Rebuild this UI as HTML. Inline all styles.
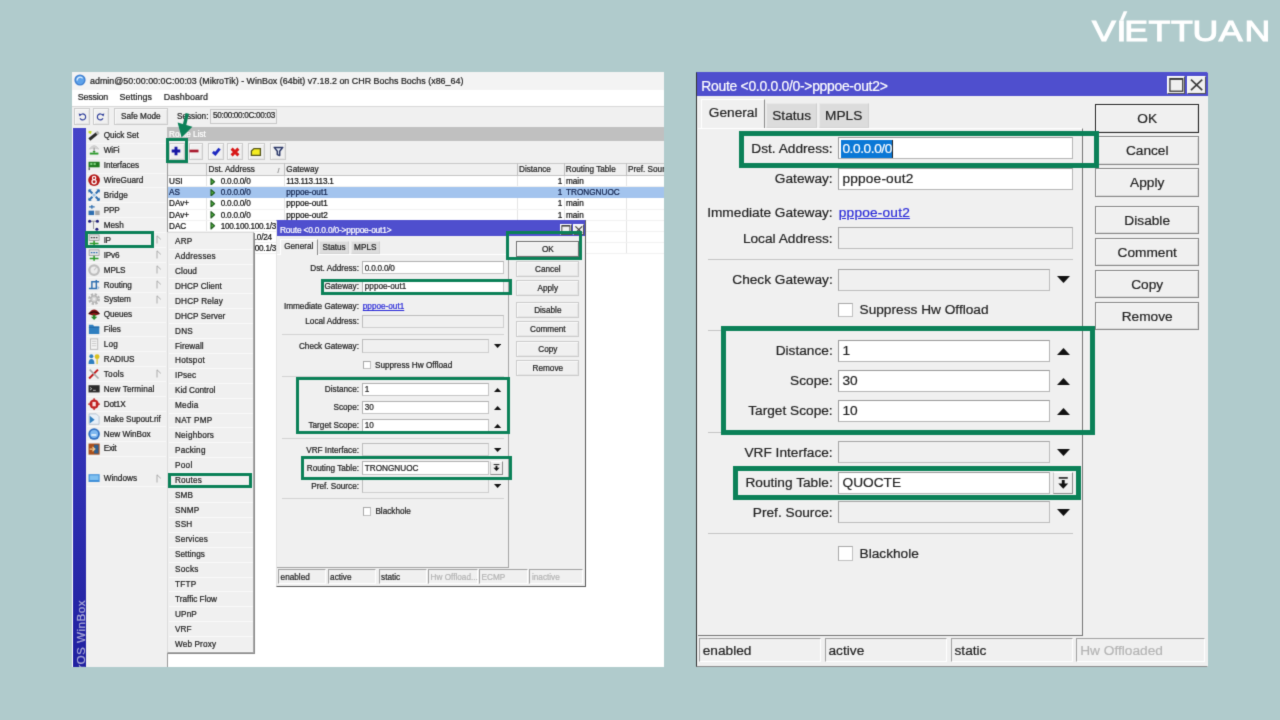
<!DOCTYPE html>
<html lang="en"><head><meta charset="utf-8"><title>WinBox Route</title>
<style>
html,body{margin:0;padding:0}
body{width:1280px;height:720px;background:#b0cbcc;position:relative;overflow:hidden;font-family:"Liberation Sans",sans-serif}
div,span,svg{position:absolute;box-sizing:border-box}
.btn{background:#f0f0f0;border:1px solid #b9b9b9;box-shadow:inset 1px 1px 0 #fbfbfb,inset -1px -1px 0 #dedede;text-align:center;color:#222}
.L .btn{border-color:#cbcbcb;box-shadow:inset 1px 1px 0 #fafafa,inset -1px -1px 0 #e6e6e6}
.L .inp{border-color:#c4c4c4;border-top-color:#b0b0b0;border-left-color:#b0b0b0}
.L .ro{border-color:#cecece;border-top-color:#bcbcbc;border-left-color:#bcbcbc}
.inp{background:#fff;border:1px solid #b4b4b4;border-top-color:#9a9a9a;border-left-color:#9a9a9a}
.ro{background:#f0f0f0;border:1px solid #bcbcbc;border-top-color:#a4a4a4;border-left-color:#a4a4a4}
.cell{border:1px solid #fff;border-top-color:#a0a0a0;border-left-color:#a0a0a0}
</style></head><body>
<svg style="left:0;top:0;width:0;height:0"><defs><filter id="blL" x="0" y="0" width="100%" height="100%" color-interpolation-filters="sRGB"><feConvolveMatrix order="3" kernelMatrix="0.0156 0.0938 0.0156 0.0938 0.5625 0.0938 0.0156 0.0938 0.0156" divisor="1" edgeMode="duplicate" preserveAlpha="true"/></filter><filter id="blR" x="0" y="0" width="100%" height="100%" color-interpolation-filters="sRGB"><feConvolveMatrix order="3" kernelMatrix="0.0121 0.0858 0.0121 0.0858 0.6084 0.0858 0.0121 0.0858 0.0121" divisor="1" edgeMode="duplicate" preserveAlpha="true"/></filter></defs></svg>
<div id="all" style="left:-6px;top:-6px;width:1292px;height:732px;background:#b0cbcc;filter:url(#blL)"><div style="left:6px;top:6px;width:1280px;height:720px">
<svg style="left:1085px;top:0;width:195px;height:52px" viewBox="0 0 195 52"><text transform="scale(1.25,1)" x="5.54 25.23 31.50 50.79 68.83 85.99 107.06 127.55" y="40.9" font-family="Liberation Sans, sans-serif" font-size="28.6" fill="#fff" stroke="#fff" stroke-width="1.0">VIETTUAN</text></svg>
<svg style="left:1115px;top:8px;width:16px;height:14px" viewBox="0 0 16 14"><polygon points="4.8,12.4 8.3,12.4 12.4,3.2 8.7,3.2" fill="#fff"/></svg>
<div id="left" class="L" style="left:0;top:0;width:680px;height:720px;-webkit-text-stroke:0.22px"><div style="left:0;top:0;width:664px;height:667px;overflow:hidden">
<div style="left:72px;top:72px;width:592px;height:595px;background:#fff"></div>
<div style="left:72px;top:72px;width:592px;height:18px;background:#f3f3f3"></div>
<svg style="left:74px;top:74px;width:12px;height:12px" viewBox="0 0 12 12"><circle cx="6" cy="6" r="5.6" fill="#3f7fd0"/><circle cx="6" cy="6" r="4.2" fill="#5da2ea"/><path d="M3.2 6.6 A3 3 0 0 1 8.6 4.4" stroke="#dfefff" stroke-width="1.2" fill="none"/></svg>
<div style="left:90px;top:75.52px;height:11.57px;line-height:11.57px;font-size:8.9px;color:#222;white-space:nowrap;letter-spacing:0.025px;">admin@50:00:00:0C:00:03 (MikroTik) - WinBox (64bit) v7.18.2 on CHR Bochs Bochs (x86_64)</div>
<div style="left:72px;top:90px;width:592px;height:15.5px;background:#fff"></div>
<div style="left:77.7px;top:92.31px;height:11.57px;line-height:11.57px;font-size:8.9px;color:#222;white-space:nowrap;letter-spacing:-0.166px;">Session</div>
<div style="left:119.4px;top:92.31px;height:11.57px;line-height:11.57px;font-size:8.9px;color:#222;white-space:nowrap;letter-spacing:0.080px;">Settings</div>
<div style="left:163.8px;top:92.31px;height:11.57px;line-height:11.57px;font-size:8.9px;color:#222;white-space:nowrap;letter-spacing:0.095px;">Dashboard</div>
<div style="left:72px;top:105.5px;width:592px;height:22px;background:#f0f0f0;border-top:1px solid #d8d8d8"></div>
<div class="btn" style="left:74px;top:107.5px;width:15.5px;height:17px;"></div>
<div class="btn" style="left:92.5px;top:107.5px;width:16.5px;height:17px;"></div>
<svg style="left:77.5px;top:111.5px;width:9px;height:9px" viewBox="0 0 9 9"><path d="M2.2 3.2 A3 3 0 1 1 2 6.3" stroke="#2d3d9a" stroke-width="1.1" fill="none"/><path d="M0.6 1.6 L3.6 2.2 L1.6 4.6Z" fill="#2d3d9a"/></svg>
<svg style="left:96.3px;top:111.5px;width:9px;height:9px" viewBox="0 0 9 9"><path d="M6.8 3.2 A3 3 0 1 0 7 6.3" stroke="#2d3d9a" stroke-width="1.1" fill="none"/><path d="M8.4 1.6 L5.4 2.2 L7.4 4.6Z" fill="#2d3d9a"/></svg>
<div class="btn" style="left:114px;top:107.5px;width:53.5px;height:17px;font-size:8.2px;line-height:15.5px">Safe Mode</div>
<div style="left:177px;top:111.77px;height:10.66px;line-height:10.66px;font-size:8.2px;color:#222;white-space:nowrap;">Session:</div>
<div style="left:210px;top:108.5px;width:67px;height:15.5px;border:1px solid #c8c8c8;background:#f0f0f0"></div>
<div style="left:213px;top:111.17px;height:10.66px;line-height:10.66px;font-size:8.2px;color:#222;white-space:nowrap;letter-spacing:-0.322px;">50:00:00:0C:00:03</div>
<div style="left:73px;top:127.5px;width:12.7px;height:539.5px;background:linear-gradient(#4444c8,#3a3ac0 40%,#2020a0)"></div>
<div style="left:75.2px;top:705.5px;width:200px;height:12.5px;line-height:12.5px;font-size:11.7px;letter-spacing:0.45px;color:#adadd8;transform-origin:0 0;transform:rotate(-90deg);white-space:nowrap;margin-left:0">&nbsp;RouterOS WinBox</div>
<div style="left:86px;top:127.5px;width:81px;height:539.5px;background:#f0f0f0"></div>
<div style="left:87px;top:142.7px;width:79px;height:1px;background:#f8f8f8"></div>
<svg style="left:88.3px;top:129.5px;width:12.2px;height:12.2px" viewBox="0 0 11 11"><path d="M1.2 8.6 L8.6 2.6" stroke="#2a2a2a" stroke-width="2.8"/><path d="M7.6 3.4 L9.6 1.8" stroke="#b8b8b8" stroke-width="2.8"/><path d="M.6 .6 L3.4 1.2 L2.6 3.6 L.4 2.8Z" fill="#c4dc28"/></svg>
<div style="left:103.75px;top:131.47px;height:10.66px;line-height:10.66px;font-size:8.2px;color:#222;white-space:nowrap;letter-spacing:-0.061px;">Quick Set</div>
<div style="left:87px;top:157.6px;width:79px;height:1px;background:#f8f8f8"></div>
<svg style="left:88.3px;top:144.41px;width:12.2px;height:12.2px" viewBox="0 0 11 11"><path d="M1.2 4.6 Q5.5 -1.8 9.8 4.6 Q5.5 2.6 1.2 4.6Z" fill="#d4d4d4" stroke="#c0c0c0" stroke-width=".6"/><rect x="4.9" y="3.4" width="1.3" height="5" fill="#a4a4a4"/><rect x="1.6" y="7.8" width="7.8" height="1.7" fill="#2a9a2a"/><path d="M4 6.4 L5.5 8 L7 6.4Z" fill="#2a9a2a"/></svg>
<div style="left:103.75px;top:146.37px;height:10.66px;line-height:10.66px;font-size:8.2px;color:#222;white-space:nowrap;letter-spacing:-0.148px;">WiFi</div>
<div style="left:87px;top:172.51px;width:79px;height:1px;background:#f8f8f8"></div>
<svg style="left:88.3px;top:159.31px;width:12.2px;height:12.2px" viewBox="0 0 11 11"><rect x=".5" y="2.5" width="10" height="5" fill="#1f7a1f"/><rect x="2" y="3.5" width="2" height="2" fill="#7fd07f"/><rect x="5" y="3.5" width="2" height="2" fill="#7fd07f"/><rect x=".5" y="7.5" width="1.2" height="2.5" fill="#555"/></svg>
<div style="left:103.75px;top:161.28px;height:10.66px;line-height:10.66px;font-size:8.2px;color:#222;white-space:nowrap;letter-spacing:-0.071px;">Interfaces</div>
<div style="left:87px;top:187.41px;width:79px;height:1px;background:#f8f8f8"></div>
<svg style="left:88.3px;top:174.22px;width:12.2px;height:12.2px" viewBox="0 0 11 11"><circle cx="5.5" cy="5.5" r="5.3" fill="#b41a1a"/><circle cx="5.5" cy="3.7" r="1.5" fill="none" stroke="#fff" stroke-width="1.1"/><circle cx="5.5" cy="7" r="1.9" fill="none" stroke="#fff" stroke-width="1.2"/></svg>
<div style="left:103.75px;top:176.18px;height:10.66px;line-height:10.66px;font-size:8.2px;color:#222;white-space:nowrap;letter-spacing:0.006px;">WireGuard</div>
<div style="left:87px;top:202.32px;width:79px;height:1px;background:#f8f8f8"></div>
<svg style="left:88.3px;top:189.12px;width:12.2px;height:12.2px" viewBox="0 0 11 11"><path d="M.8 .8 L4 4 M10.2 .8 L7 4 M.8 10.2 L4 7 M10.2 10.2 L7 7" stroke="#2f6fb0" stroke-width="1.9"/><path d="M.5 .5 H3.4 L.5 3.4Z M10.5 .5 V3.4 L7.6 .5Z M.5 10.5 V7.6 L3.4 10.5Z M10.5 10.5 H7.6 L10.5 7.6Z" fill="#2f6fb0"/><rect x="4.2" y="4.2" width="2.6" height="2.6" fill="#9cc4e8"/></svg>
<div style="left:103.75px;top:191.09px;height:10.66px;line-height:10.66px;font-size:8.2px;color:#222;white-space:nowrap;letter-spacing:0.083px;">Bridge</div>
<div style="left:87px;top:217.22px;width:79px;height:1px;background:#f8f8f8"></div>
<svg style="left:88.3px;top:204.02px;width:12.2px;height:12.2px" viewBox="0 0 11 11"><rect x=".5" y="6" width="5" height="4" fill="#2f6fb0"/><rect x="6.5" y="6" width="4" height="4" fill="#a8a8a8"/><path d="M1 2.5 H6 M3.5 .8 V4.2" stroke="#2f6fb0" stroke-width="1.1"/></svg>
<div style="left:103.75px;top:205.99px;height:10.66px;line-height:10.66px;font-size:8.2px;color:#222;white-space:nowrap;letter-spacing:-0.203px;">PPP</div>
<div style="left:87px;top:232.13px;width:79px;height:1px;background:#f8f8f8"></div>
<svg style="left:88.3px;top:218.93px;width:12.2px;height:12.2px" viewBox="0 0 11 11"><path d="M1.5 2 H8.5 M5 2 V9" stroke="#9a9a9a" stroke-width=".9" fill="none"/><circle cx="1.5" cy="2" r="1.4" fill="#20207a"/><circle cx="8.5" cy="2" r="1.4" fill="#20207a"/><circle cx="8" cy="9.3" r="1.4" fill="#20207a"/></svg>
<div style="left:103.75px;top:220.9px;height:10.66px;line-height:10.66px;font-size:8.2px;color:#222;white-space:nowrap;letter-spacing:-0.013px;">Mesh</div>
<div style="left:87px;top:247.03px;width:79px;height:1px;background:#f8f8f8"></div>
<svg style="left:88.3px;top:233.83px;width:12.2px;height:12.2px" viewBox="0 0 11 11"><rect x="1" y=".8" width="9" height="5" fill="#e4e4e4" stroke="#8a8a8a" stroke-width=".6"/><path d="M2.5 3.3 H8.5" stroke="#444" stroke-width="1.2" stroke-dasharray="1.5 .8"/><path d="M1.5 8.5 H9.5 M5.5 6 V10.5" stroke="#2a9a2a" stroke-width="1.4"/></svg>
<div style="left:103.75px;top:235.8px;height:10.66px;line-height:10.66px;font-size:8.2px;color:#222;white-space:nowrap;letter-spacing:-0.524px;">IP</div>
<svg style="left:155.5px;top:235.33px;width:6px;height:9px" viewBox="0 0 6 9"><path d="M1 8.5 V.8 L4.8 4.4" stroke="#9a9a9a" stroke-width=".8" fill="none"/></svg>
<div style="left:87px;top:261.94px;width:79px;height:1px;background:#f8f8f8"></div>
<svg style="left:88.3px;top:248.74px;width:12.2px;height:12.2px" viewBox="0 0 11 11"><rect x="1" y=".8" width="9" height="5" fill="#e4e4e4" stroke="#8a8a8a" stroke-width=".6"/><path d="M2.5 3.3 H8.5" stroke="#2f6fb0" stroke-width="1.2" stroke-dasharray="1.5 .8"/><path d="M1.5 8.5 H9.5 M5.5 6 V10.5" stroke="#2a9a2a" stroke-width="1.4"/></svg>
<div style="left:103.75px;top:250.71px;height:10.66px;line-height:10.66px;font-size:8.2px;color:#222;white-space:nowrap;letter-spacing:-0.227px;">IPv6</div>
<svg style="left:155.5px;top:250.24px;width:6px;height:9px" viewBox="0 0 6 9"><path d="M1 8.5 V.8 L4.8 4.4" stroke="#9a9a9a" stroke-width=".8" fill="none"/></svg>
<div style="left:87px;top:276.84px;width:79px;height:1px;background:#f8f8f8"></div>
<svg style="left:88.3px;top:263.64px;width:12.2px;height:12.2px" viewBox="0 0 11 11"><circle cx="5.5" cy="5.5" r="4.3" fill="#ececec" stroke="#bdbdbd" stroke-width="2"/><path d="M5.5 5.5 L8 2.5" stroke="#c8c8c8" stroke-width="1"/></svg>
<div style="left:103.75px;top:265.62px;height:10.66px;line-height:10.66px;font-size:8.2px;color:#222;white-space:nowrap;letter-spacing:-0.158px;">MPLS</div>
<svg style="left:155.5px;top:265.14px;width:6px;height:9px" viewBox="0 0 6 9"><path d="M1 8.5 V.8 L4.8 4.4" stroke="#9a9a9a" stroke-width=".8" fill="none"/></svg>
<div style="left:87px;top:291.75px;width:79px;height:1px;background:#f8f8f8"></div>
<svg style="left:88.3px;top:278.55px;width:12.2px;height:12.2px" viewBox="0 0 11 11"><path d="M.8 8.5 H3.5 V2.5 H10 M3.5 8.5 H7.5 V1" stroke="#2f6fb0" stroke-width="1.3" fill="none"/><path d="M8.5 6 L10.5 8 L8.5 10" fill="#9ab8d8"/></svg>
<div style="left:103.75px;top:280.52px;height:10.66px;line-height:10.66px;font-size:8.2px;color:#222;white-space:nowrap;letter-spacing:-0.038px;">Routing</div>
<svg style="left:155.5px;top:280.05px;width:6px;height:9px" viewBox="0 0 6 9"><path d="M1 8.5 V.8 L4.8 4.4" stroke="#9a9a9a" stroke-width=".8" fill="none"/></svg>
<div style="left:87px;top:306.65px;width:79px;height:1px;background:#f8f8f8"></div>
<svg style="left:88.3px;top:293.45px;width:12.2px;height:12.2px" viewBox="0 0 11 11"><circle cx="5.5" cy="5.5" r="4" fill="none" stroke="#b4b4b4" stroke-width="2.6" stroke-dasharray="1.9 1.24"/><circle cx="5.5" cy="5.5" r="2.9" fill="#d4d4d4" stroke="#b4b4b4" stroke-width="1"/><circle cx="5.5" cy="5.5" r="1.2" fill="#ececec"/></svg>
<div style="left:103.75px;top:295.43px;height:10.66px;line-height:10.66px;font-size:8.2px;color:#222;white-space:nowrap;letter-spacing:-0.057px;">System</div>
<svg style="left:155.5px;top:294.95px;width:6px;height:9px" viewBox="0 0 6 9"><path d="M1 8.5 V.8 L4.8 4.4" stroke="#9a9a9a" stroke-width=".8" fill="none"/></svg>
<div style="left:87px;top:321.56px;width:79px;height:1px;background:#f8f8f8"></div>
<svg style="left:88.3px;top:308.36px;width:12.2px;height:12.2px" viewBox="0 0 11 11"><path d="M.3 5.4 Q5.5 -2.6 10.7 5.4 L5.5 7.2Z" fill="#8a1414"/><path d="M.8 5.2 Q5.5 1.6 10.2 5.2" stroke="#2a0a0a" stroke-width="1.1" fill="none"/><path d="M4.4 6 H6.6 V8 H8.4 L5.5 10.8 L2.6 8 H4.4Z" fill="#2a8a2a"/></svg>
<div style="left:103.75px;top:310.33px;height:10.66px;line-height:10.66px;font-size:8.2px;color:#222;white-space:nowrap;letter-spacing:-0.070px;">Queues</div>
<div style="left:87px;top:336.46px;width:79px;height:1px;background:#f8f8f8"></div>
<svg style="left:88.3px;top:323.26px;width:12.2px;height:12.2px" viewBox="0 0 11 11"><path d="M.8 1.5 H4.5 L5.5 3 H10.2 V10 H.8Z" fill="#2f7fc0"/><path d="M.8 4 H10.2" stroke="#1f5f9a" stroke-width=".6"/></svg>
<div style="left:103.75px;top:325.24px;height:10.66px;line-height:10.66px;font-size:8.2px;color:#222;white-space:nowrap;letter-spacing:-0.063px;">Files</div>
<div style="left:87px;top:351.37px;width:79px;height:1px;background:#f8f8f8"></div>
<svg style="left:88.3px;top:338.17px;width:12.2px;height:12.2px" viewBox="0 0 11 11"><rect x="2.2" y=".8" width="6.6" height="9.4" fill="#f4f4f4" stroke="#b4b4b4" stroke-width=".8"/><path d="M3.5 3 H7.5 M3.5 5 H7.5 M3.5 7 H7.5" stroke="#c0c0c0" stroke-width=".7"/></svg>
<div style="left:103.75px;top:340.14px;height:10.66px;line-height:10.66px;font-size:8.2px;color:#222;white-space:nowrap;letter-spacing:0.173px;">Log</div>
<div style="left:87px;top:366.27px;width:79px;height:1px;background:#f8f8f8"></div>
<svg style="left:88.3px;top:353.07px;width:12.2px;height:12.2px" viewBox="0 0 11 11"><circle cx="3" cy="3" r="1.8" fill="#2f7fc0"/><path d="M.5 10 Q.5 5.5 3 5.5 Q5.8 5.5 5.8 10Z" fill="#2f7fc0"/><circle cx="8.2" cy="3.3" r="2.2" fill="#d8c020"/><rect x="7.7" y="5" width="1" height="5" fill="#d8c020"/></svg>
<div style="left:103.75px;top:355.05px;height:10.66px;line-height:10.66px;font-size:8.2px;color:#222;white-space:nowrap;letter-spacing:-0.031px;">RADIUS</div>
<div style="left:87px;top:381.18px;width:79px;height:1px;background:#f8f8f8"></div>
<svg style="left:88.3px;top:367.98px;width:12.2px;height:12.2px" viewBox="0 0 11 11"><path d="M1 9.5 L9 1.5" stroke="#c01818" stroke-width="1.8"/><path d="M1.5 1.5 L9.5 9.5" stroke="#a8a8a8" stroke-width="1.5"/></svg>
<div style="left:103.75px;top:369.95px;height:10.66px;line-height:10.66px;font-size:8.2px;color:#222;white-space:nowrap;letter-spacing:0.271px;">Tools</div>
<svg style="left:155.5px;top:369.48px;width:6px;height:9px" viewBox="0 0 6 9"><path d="M1 8.5 V.8 L4.8 4.4" stroke="#9a9a9a" stroke-width=".8" fill="none"/></svg>
<div style="left:87px;top:396.08px;width:79px;height:1px;background:#f8f8f8"></div>
<svg style="left:88.3px;top:382.88px;width:12.2px;height:12.2px" viewBox="0 0 11 11"><rect x=".5" y="2" width="10" height="6.5" fill="#2a2a2a"/><path d="M1.8 4 L3.4 5.2 L1.8 6.4 M4.5 6.6 H7" stroke="#ddd" stroke-width=".7" fill="none"/></svg>
<div style="left:103.75px;top:384.86px;height:10.66px;line-height:10.66px;font-size:8.2px;color:#222;white-space:nowrap;letter-spacing:0.106px;">New Terminal</div>
<div style="left:87px;top:410.99px;width:79px;height:1px;background:#f8f8f8"></div>
<svg style="left:88.3px;top:397.79px;width:12.2px;height:12.2px" viewBox="0 0 11 11"><circle cx="5.5" cy="5.5" r="4.2" fill="#c02020"/><path d="M.2 5.5 H10.8 M5.5 .2 V10.8" stroke="#c02020" stroke-width="1.2"/><rect x="4" y="3.5" width="3" height="4" fill="#f8e0e0"/></svg>
<div style="left:103.75px;top:399.76px;height:10.66px;line-height:10.66px;font-size:8.2px;color:#222;white-space:nowrap;letter-spacing:-0.218px;">Dot1X</div>
<div style="left:87px;top:425.89px;width:79px;height:1px;background:#f8f8f8"></div>
<svg style="left:88.3px;top:412.69px;width:12.2px;height:12.2px" viewBox="0 0 11 11"><path d="M1 .8 H7.5 L10 3.3 V10.2 H1Z" fill="#e8f0f8" stroke="#a8b8c8" stroke-width=".7"/><path d="M1.5 2.5 L6 6 L1.5 9.5Z" fill="#2f7fc0"/></svg>
<div style="left:103.75px;top:414.67px;height:10.66px;line-height:10.66px;font-size:8.2px;color:#222;white-space:nowrap;letter-spacing:-0.015px;">Make Supout.rif</div>
<div style="left:87px;top:440.8px;width:79px;height:1px;background:#f8f8f8"></div>
<svg style="left:88.3px;top:427.6px;width:12.2px;height:12.2px" viewBox="0 0 11 11"><circle cx="5.5" cy="5.5" r="5.2" fill="#2f6fc0"/><circle cx="5.5" cy="5.5" r="3.6" fill="#7fb8f0"/><path d="M3 6.3 H7.5" stroke="#fff" stroke-width="1.2"/></svg>
<div style="left:103.75px;top:429.57px;height:10.66px;line-height:10.66px;font-size:8.2px;color:#222;white-space:nowrap;letter-spacing:0.007px;">New WinBox</div>
<div style="left:87px;top:455.7px;width:79px;height:1px;background:#f8f8f8"></div>
<svg style="left:88.3px;top:442.5px;width:12.2px;height:12.2px" viewBox="0 0 11 11"><rect x=".5" y=".5" width="10" height="10" fill="#a8501c"/><rect x="5.5" y="1.5" width="4" height="8" fill="#2f5f8f"/><path d="M1.5 5.5 H6 M4 3.5 L6.2 5.5 L4 7.5" stroke="#f0c890" stroke-width="1.1" fill="none"/></svg>
<div style="left:103.75px;top:444.48px;height:10.66px;line-height:10.66px;font-size:8.2px;color:#222;white-space:nowrap;letter-spacing:-0.292px;">Exit</div>
<div style="left:87px;top:485.51px;width:79px;height:1px;background:#f8f8f8"></div>
<svg style="left:88.3px;top:472.31px;width:12.2px;height:12.2px" viewBox="0 0 11 11"><rect x=".5" y="2" width="10" height="7" fill="#3f8fd8"/><rect x="1.5" y="3" width="8" height="4.2" fill="#7fc0f0"/></svg>
<div style="left:103.75px;top:474.29px;height:10.66px;line-height:10.66px;font-size:8.2px;color:#222;white-space:nowrap;letter-spacing:0.005px;">Windows</div>
<svg style="left:155.5px;top:473.81px;width:6px;height:9px" viewBox="0 0 6 9"><path d="M1 8.5 V.8 L4.8 4.4" stroke="#9a9a9a" stroke-width=".8" fill="none"/></svg>
<div style="left:167px;top:127px;width:497px;height:14px;background:#c0c0c0"></div>
<div style="left:169px;top:130.27px;height:10.66px;line-height:10.66px;font-size:8.2px;color:#fff;white-space:nowrap;">Route List</div>
<div style="left:167px;top:141px;width:497px;height:21.5px;background:#f0f0f0"></div>
<div class="btn" style="left:168.75px;top:142.5px;width:16.25px;height:17.5px;"></div>
<div class="btn" style="left:189px;top:142.5px;width:13.5px;height:17.5px;"></div>
<div class="btn" style="left:207.5px;top:142.5px;width:16.5px;height:17.5px;"></div>
<div class="btn" style="left:227px;top:142.5px;width:15.5px;height:17.5px;"></div>
<div class="btn" style="left:248px;top:142.5px;width:16.5px;height:17.5px;"></div>
<div class="btn" style="left:270px;top:142.5px;width:16px;height:17.5px;"></div>
<svg style="left:170.9px;top:146.4px;width:10px;height:10px" viewBox="0 0 10 10"><path d="M5 .7 V9.3 M.7 5 H9.3" stroke="#1616a4" stroke-width="2.9"/></svg>
<svg style="left:189.4px;top:146.4px;width:10px;height:10px" viewBox="0 0 10 10"><path d="M.5 5 H9.5" stroke="#a8182c" stroke-width="2.7"/></svg>
<svg style="left:211px;top:146px;width:11px;height:11px" viewBox="0 0 11 11"><path d="M1.9 5.9 L4.3 8 L8.6 2.6" stroke="#1c28c0" stroke-width="2.9" fill="none"/></svg>
<svg style="left:229.8px;top:146.7px;width:10px;height:10px" viewBox="0 0 10 10"><path d="M1.6 1.6 L8.4 8.4 M8.4 1.6 L1.6 8.4" stroke="#d81818" stroke-width="2.9"/></svg>
<svg style="left:250.3px;top:146.6px;width:12px;height:10px" viewBox="0 0 12 10"><path d="M1.4 4 L4 1.6 H10.4 V8.4 H1.4Z" fill="#f4ec20" stroke="#55551a" stroke-width="1.3"/></svg>
<svg style="left:273.2px;top:146.4px;width:11px;height:11px" viewBox="0 0 11 11"><path d="M1.2 1.4 H9.8 L6.7 5.2 V9.6 L4.3 8.6 V5.2Z" fill="#dfe6f2" stroke="#2c3868" stroke-width="1.5" stroke-linejoin="round"/></svg>
<div style="left:167px;top:162.5px;width:497px;height:13px;background:#f0f0f0;border-top:1px solid #c8c8c8;border-bottom:1px solid #c4c4c4"></div>
<div style="left:205.5px;top:163px;width:1px;height:12.5px;background:#c0c0c0"></div>
<div style="left:205.5px;top:175.5px;width:1px;height:78px;background:#e4e4e4"></div>
<div style="left:283.5px;top:163px;width:1px;height:12.5px;background:#c0c0c0"></div>
<div style="left:283.5px;top:175.5px;width:1px;height:78px;background:#e4e4e4"></div>
<div style="left:516.5px;top:163px;width:1px;height:12.5px;background:#c0c0c0"></div>
<div style="left:516.5px;top:175.5px;width:1px;height:78px;background:#e4e4e4"></div>
<div style="left:563.5px;top:163px;width:1px;height:12.5px;background:#c0c0c0"></div>
<div style="left:563.5px;top:175.5px;width:1px;height:78px;background:#e4e4e4"></div>
<div style="left:625.8px;top:163px;width:1px;height:12.5px;background:#c0c0c0"></div>
<div style="left:625.8px;top:175.5px;width:1px;height:78px;background:#e4e4e4"></div>
<div style="left:208.5px;top:165.07px;height:10.66px;line-height:10.66px;font-size:8.2px;color:#222;white-space:nowrap;">Dst. Address</div>
<div style="left:286.3px;top:165.07px;height:10.66px;line-height:10.66px;font-size:8.2px;color:#222;white-space:nowrap;">Gateway</div>
<div style="left:519px;top:165.07px;height:10.66px;line-height:10.66px;font-size:8.2px;color:#222;white-space:nowrap;">Distance</div>
<div style="left:565.8px;top:165.07px;height:10.66px;line-height:10.66px;font-size:8.2px;color:#222;white-space:nowrap;">Routing Table</div>
<div style="left:628px;top:165.07px;height:10.66px;line-height:10.66px;font-size:8.2px;color:#222;white-space:nowrap;">Pref. Sour</div>
<div style="left:277.5px;top:165.85px;height:9.1px;line-height:9.1px;font-size:7px;color:#888;white-space:nowrap;">/</div>
<div style="left:167px;top:163px;width:1px;height:504px;background:#9a9a9a"></div>
<div style="left:168px;top:186.45px;width:496px;height:0.8px;background:#f1f1f1"></div>
<div style="left:169px;top:177.14px;height:10.66px;line-height:10.66px;font-size:8.2px;color:#111;white-space:nowrap;">USI</div>
<svg style="left:210px;top:177.57px;width:6px;height:7.6px" viewBox="0 0 6 7.6"><path d="M1 .6 L4.5 3.8 L1 7Z" fill="#52b43c" stroke="#1f5a1f" stroke-width="1.15" stroke-linejoin="round"/></svg>
<div style="left:220.7px;top:177.14px;height:10.66px;line-height:10.66px;font-size:8.2px;color:#111;white-space:nowrap;letter-spacing:-0.230px;">0.0.0.0/0</div>
<div style="left:286.3px;top:177.14px;height:10.66px;line-height:10.66px;font-size:8.2px;color:#111;white-space:nowrap;letter-spacing:-0.253px;">113.113.113.1</div>
<div style="left:162.3px;width:400px;text-align:right;top:177.14px;height:10.66px;line-height:10.66px;font-size:8.2px;color:#111;white-space:nowrap;">1</div>
<div style="left:566px;top:177.14px;height:10.66px;line-height:10.66px;font-size:8.2px;color:#111;white-space:nowrap;">main</div>
<div style="left:168px;top:187.25px;width:496px;height:10.65px;background:#a3c4ee"></div>
<div style="left:169px;top:188.29px;height:10.66px;line-height:10.66px;font-size:8.2px;color:#10204a;white-space:nowrap;">AS</div>
<svg style="left:210px;top:188.72px;width:6px;height:7.6px" viewBox="0 0 6 7.6"><path d="M1 .6 L4.5 3.8 L1 7Z" fill="#52b43c" stroke="#1f5a1f" stroke-width="1.15" stroke-linejoin="round"/></svg>
<div style="left:220.7px;top:188.29px;height:10.66px;line-height:10.66px;font-size:8.2px;color:#10204a;white-space:nowrap;letter-spacing:-0.230px;">0.0.0.0/0</div>
<div style="left:286.3px;top:188.29px;height:10.66px;line-height:10.66px;font-size:8.2px;color:#10204a;white-space:nowrap;">pppoe-out1</div>
<div style="left:162.3px;width:400px;text-align:right;top:188.29px;height:10.66px;line-height:10.66px;font-size:8.2px;color:#10204a;white-space:nowrap;">1</div>
<div style="left:566px;top:188.29px;height:10.66px;line-height:10.66px;font-size:8.2px;color:#10204a;white-space:nowrap;">TRONGNUOC</div>
<div style="left:168px;top:208.75px;width:496px;height:0.8px;background:#f1f1f1"></div>
<div style="left:169px;top:199.44px;height:10.66px;line-height:10.66px;font-size:8.2px;color:#111;white-space:nowrap;">DAv+</div>
<svg style="left:210px;top:199.88px;width:6px;height:7.6px" viewBox="0 0 6 7.6"><path d="M1 .6 L4.5 3.8 L1 7Z" fill="#52b43c" stroke="#1f5a1f" stroke-width="1.15" stroke-linejoin="round"/></svg>
<div style="left:220.7px;top:199.44px;height:10.66px;line-height:10.66px;font-size:8.2px;color:#111;white-space:nowrap;letter-spacing:-0.230px;">0.0.0.0/0</div>
<div style="left:286.3px;top:199.44px;height:10.66px;line-height:10.66px;font-size:8.2px;color:#111;white-space:nowrap;">pppoe-out1</div>
<div style="left:162.3px;width:400px;text-align:right;top:199.44px;height:10.66px;line-height:10.66px;font-size:8.2px;color:#111;white-space:nowrap;">1</div>
<div style="left:566px;top:199.44px;height:10.66px;line-height:10.66px;font-size:8.2px;color:#111;white-space:nowrap;">main</div>
<div style="left:168px;top:219.9px;width:496px;height:0.8px;background:#f1f1f1"></div>
<div style="left:169px;top:210.59px;height:10.66px;line-height:10.66px;font-size:8.2px;color:#111;white-space:nowrap;">DAv+</div>
<svg style="left:210px;top:211.02px;width:6px;height:7.6px" viewBox="0 0 6 7.6"><path d="M1 .6 L4.5 3.8 L1 7Z" fill="#52b43c" stroke="#1f5a1f" stroke-width="1.15" stroke-linejoin="round"/></svg>
<div style="left:220.7px;top:210.59px;height:10.66px;line-height:10.66px;font-size:8.2px;color:#111;white-space:nowrap;letter-spacing:-0.230px;">0.0.0.0/0</div>
<div style="left:286.3px;top:210.59px;height:10.66px;line-height:10.66px;font-size:8.2px;color:#111;white-space:nowrap;">pppoe-out2</div>
<div style="left:162.3px;width:400px;text-align:right;top:210.59px;height:10.66px;line-height:10.66px;font-size:8.2px;color:#111;white-space:nowrap;">1</div>
<div style="left:566px;top:210.59px;height:10.66px;line-height:10.66px;font-size:8.2px;color:#111;white-space:nowrap;">main</div>
<div style="left:168px;top:231.05px;width:496px;height:0.8px;background:#f1f1f1"></div>
<div style="left:169px;top:221.74px;height:10.66px;line-height:10.66px;font-size:8.2px;color:#111;white-space:nowrap;">DAC</div>
<svg style="left:210px;top:222.17px;width:6px;height:7.6px" viewBox="0 0 6 7.6"><path d="M1 .6 L4.5 3.8 L1 7Z" fill="#52b43c" stroke="#1f5a1f" stroke-width="1.15" stroke-linejoin="round"/></svg>
<div style="left:220.7px;top:221.74px;height:10.66px;line-height:10.66px;font-size:8.2px;color:#111;white-space:nowrap;letter-spacing:-0.259px;">100.100.100.1/32</div>
<div style="left:286.3px;top:221.74px;height:10.66px;line-height:10.66px;font-size:8.2px;color:#111;white-space:nowrap;">pppoe-out1</div>
<div style="left:162.3px;width:400px;text-align:right;top:221.74px;height:10.66px;line-height:10.66px;font-size:8.2px;color:#111;white-space:nowrap;">0</div>
<div style="left:566px;top:221.74px;height:10.66px;line-height:10.66px;font-size:8.2px;color:#111;white-space:nowrap;">main</div>
<div style="left:168px;top:242.2px;width:496px;height:0.8px;background:#f1f1f1"></div>
<div style="left:169px;top:232.89px;height:10.66px;line-height:10.66px;font-size:8.2px;color:#111;white-space:nowrap;">DAC</div>
<svg style="left:210px;top:233.32px;width:6px;height:7.6px" viewBox="0 0 6 7.6"><path d="M1 .6 L4.5 3.8 L1 7Z" fill="#52b43c" stroke="#1f5a1f" stroke-width="1.15" stroke-linejoin="round"/></svg>
<div style="left:220.7px;top:232.89px;height:10.66px;line-height:10.66px;font-size:8.2px;color:#111;white-space:nowrap;letter-spacing:-0.254px;">192.168.1.0/24</div>
<div style="left:286.3px;top:232.89px;height:10.66px;line-height:10.66px;font-size:8.2px;color:#111;white-space:nowrap;">ether2</div>
<div style="left:162.3px;width:400px;text-align:right;top:232.89px;height:10.66px;line-height:10.66px;font-size:8.2px;color:#111;white-space:nowrap;">0</div>
<div style="left:566px;top:232.89px;height:10.66px;line-height:10.66px;font-size:8.2px;color:#111;white-space:nowrap;">main</div>
<div style="left:168px;top:253.35px;width:496px;height:0.8px;background:#f1f1f1"></div>
<div style="left:169px;top:244.04px;height:10.66px;line-height:10.66px;font-size:8.2px;color:#111;white-space:nowrap;">DAC</div>
<svg style="left:210px;top:244.47px;width:6px;height:7.6px" viewBox="0 0 6 7.6"><path d="M1 .6 L4.5 3.8 L1 7Z" fill="#52b43c" stroke="#1f5a1f" stroke-width="1.15" stroke-linejoin="round"/></svg>
<div style="left:220.7px;top:244.04px;height:10.66px;line-height:10.66px;font-size:8.2px;color:#111;white-space:nowrap;letter-spacing:-0.259px;">100.100.100.1/32</div>
<div style="left:286.3px;top:244.04px;height:10.66px;line-height:10.66px;font-size:8.2px;color:#111;white-space:nowrap;">pppoe-out2</div>
<div style="left:162.3px;width:400px;text-align:right;top:244.04px;height:10.66px;line-height:10.66px;font-size:8.2px;color:#111;white-space:nowrap;">0</div>
<div style="left:566px;top:244.04px;height:10.66px;line-height:10.66px;font-size:8.2px;color:#111;white-space:nowrap;">main</div>
<div style="left:167px;top:232px;width:87px;height:420.5px;background:#f0f0f0;border:1px solid #a8a8a8;border-top-color:#dcdcdc;border-left-color:#dcdcdc;box-shadow:1px 1px 0 #8a8a8a"></div>
<div style="left:168.5px;top:248.6px;width:84px;height:0.9px;background:#f9f9f9"></div>
<div style="left:175px;top:237.17px;height:10.66px;line-height:10.66px;font-size:8.2px;color:#222;white-space:nowrap;letter-spacing:0.213px;">ARP</div>
<div style="left:168.5px;top:263.51px;width:84px;height:0.9px;background:#f9f9f9"></div>
<div style="left:175px;top:252.08px;height:10.66px;line-height:10.66px;font-size:8.2px;color:#222;white-space:nowrap;letter-spacing:0.251px;">Addresses</div>
<div style="left:168.5px;top:278.41px;width:84px;height:0.9px;background:#f9f9f9"></div>
<div style="left:175px;top:266.98px;height:10.66px;line-height:10.66px;font-size:8.2px;color:#222;white-space:nowrap;letter-spacing:0.115px;">Cloud</div>
<div style="left:168.5px;top:293.32px;width:84px;height:0.9px;background:#f9f9f9"></div>
<div style="left:175px;top:281.89px;height:10.66px;line-height:10.66px;font-size:8.2px;color:#222;white-space:nowrap;letter-spacing:0.061px;">DHCP Client</div>
<div style="left:168.5px;top:308.23px;width:84px;height:0.9px;background:#f9f9f9"></div>
<div style="left:175px;top:296.8px;height:10.66px;line-height:10.66px;font-size:8.2px;color:#222;white-space:nowrap;letter-spacing:0.167px;">DHCP Relay</div>
<div style="left:168.5px;top:323.13px;width:84px;height:0.9px;background:#f9f9f9"></div>
<div style="left:175px;top:311.71px;height:10.66px;line-height:10.66px;font-size:8.2px;color:#222;white-space:nowrap;letter-spacing:0.089px;">DHCP Server</div>
<div style="left:168.5px;top:338.04px;width:84px;height:0.9px;background:#f9f9f9"></div>
<div style="left:175px;top:326.61px;height:10.66px;line-height:10.66px;font-size:8.2px;color:#222;white-space:nowrap;letter-spacing:0.229px;">DNS</div>
<div style="left:168.5px;top:352.95px;width:84px;height:0.9px;background:#f9f9f9"></div>
<div style="left:175px;top:341.52px;height:10.66px;line-height:10.66px;font-size:8.2px;color:#222;white-space:nowrap;letter-spacing:0.056px;">Firewall</div>
<div style="left:168.5px;top:367.86px;width:84px;height:0.9px;background:#f9f9f9"></div>
<div style="left:175px;top:356.43px;height:10.66px;line-height:10.66px;font-size:8.2px;color:#222;white-space:nowrap;letter-spacing:0.249px;">Hotspot</div>
<div style="left:168.5px;top:382.76px;width:84px;height:0.9px;background:#f9f9f9"></div>
<div style="left:175px;top:371.33px;height:10.66px;line-height:10.66px;font-size:8.2px;color:#222;white-space:nowrap;letter-spacing:0.138px;">IPsec</div>
<div style="left:168.5px;top:397.67px;width:84px;height:0.9px;background:#f9f9f9"></div>
<div style="left:175px;top:386.24px;height:10.66px;line-height:10.66px;font-size:8.2px;color:#222;white-space:nowrap;letter-spacing:-0.006px;">Kid Control</div>
<div style="left:168.5px;top:412.58px;width:84px;height:0.9px;background:#f9f9f9"></div>
<div style="left:175px;top:401.15px;height:10.66px;line-height:10.66px;font-size:8.2px;color:#222;white-space:nowrap;letter-spacing:0.273px;">Media</div>
<div style="left:168.5px;top:427.48px;width:84px;height:0.9px;background:#f9f9f9"></div>
<div style="left:175px;top:416.05px;height:10.66px;line-height:10.66px;font-size:8.2px;color:#222;white-space:nowrap;letter-spacing:0.258px;">NAT PMP</div>
<div style="left:168.5px;top:442.39px;width:84px;height:0.9px;background:#f9f9f9"></div>
<div style="left:175px;top:430.96px;height:10.66px;line-height:10.66px;font-size:8.2px;color:#222;white-space:nowrap;letter-spacing:0.202px;">Neighbors</div>
<div style="left:168.5px;top:457.3px;width:84px;height:0.9px;background:#f9f9f9"></div>
<div style="left:175px;top:445.87px;height:10.66px;line-height:10.66px;font-size:8.2px;color:#222;white-space:nowrap;letter-spacing:0.218px;">Packing</div>
<div style="left:168.5px;top:472.2px;width:84px;height:0.9px;background:#f9f9f9"></div>
<div style="left:175px;top:460.78px;height:10.66px;line-height:10.66px;font-size:8.2px;color:#222;white-space:nowrap;letter-spacing:0.272px;">Pool</div>
<div style="left:168.5px;top:487.11px;width:84px;height:0.9px;background:#f9f9f9"></div>
<div style="left:175px;top:475.68px;height:10.66px;line-height:10.66px;font-size:8.2px;color:#222;white-space:nowrap;letter-spacing:0.170px;">Routes</div>
<div style="left:168.5px;top:502.02px;width:84px;height:0.9px;background:#f9f9f9"></div>
<div style="left:175px;top:490.59px;height:10.66px;line-height:10.66px;font-size:8.2px;color:#222;white-space:nowrap;letter-spacing:0.077px;">SMB</div>
<div style="left:168.5px;top:516.93px;width:84px;height:0.9px;background:#f9f9f9"></div>
<div style="left:175px;top:505.5px;height:10.66px;line-height:10.66px;font-size:8.2px;color:#222;white-space:nowrap;letter-spacing:0.202px;">SNMP</div>
<div style="left:168.5px;top:531.83px;width:84px;height:0.9px;background:#f9f9f9"></div>
<div style="left:175px;top:520.4px;height:10.66px;line-height:10.66px;font-size:8.2px;color:#222;white-space:nowrap;letter-spacing:0.213px;">SSH</div>
<div style="left:168.5px;top:546.74px;width:84px;height:0.9px;background:#f9f9f9"></div>
<div style="left:175px;top:535.31px;height:10.66px;line-height:10.66px;font-size:8.2px;color:#222;white-space:nowrap;letter-spacing:0.195px;">Services</div>
<div style="left:168.5px;top:561.65px;width:84px;height:0.9px;background:#f9f9f9"></div>
<div style="left:175px;top:550.22px;height:10.66px;line-height:10.66px;font-size:8.2px;color:#222;white-space:nowrap;letter-spacing:0.046px;">Settings</div>
<div style="left:168.5px;top:576.55px;width:84px;height:0.9px;background:#f9f9f9"></div>
<div style="left:175px;top:565.12px;height:10.66px;line-height:10.66px;font-size:8.2px;color:#222;white-space:nowrap;letter-spacing:0.274px;">Socks</div>
<div style="left:168.5px;top:591.46px;width:84px;height:0.9px;background:#f9f9f9"></div>
<div style="left:175px;top:580.03px;height:10.66px;line-height:10.66px;font-size:8.2px;color:#222;white-space:nowrap;letter-spacing:0.251px;">TFTP</div>
<div style="left:168.5px;top:606.37px;width:84px;height:0.9px;background:#f9f9f9"></div>
<div style="left:175px;top:594.94px;height:10.66px;line-height:10.66px;font-size:8.2px;color:#222;white-space:nowrap;letter-spacing:0.007px;">Traffic Flow</div>
<div style="left:168.5px;top:621.28px;width:84px;height:0.9px;background:#f9f9f9"></div>
<div style="left:175px;top:609.85px;height:10.66px;line-height:10.66px;font-size:8.2px;color:#222;white-space:nowrap;letter-spacing:0.145px;">UPnP</div>
<div style="left:168.5px;top:636.18px;width:84px;height:0.9px;background:#f9f9f9"></div>
<div style="left:175px;top:624.75px;height:10.66px;line-height:10.66px;font-size:8.2px;color:#222;white-space:nowrap;letter-spacing:0.100px;">VRF</div>
<div style="left:168.5px;top:651.09px;width:84px;height:0.9px;background:#f9f9f9"></div>
<div style="left:175px;top:639.66px;height:10.66px;line-height:10.66px;font-size:8.2px;color:#222;white-space:nowrap;letter-spacing:0.139px;">Web Proxy</div>
<div style="left:276px;top:220px;width:310px;height:367px;background:#f0f0f0;border:1px solid #5a5a5a;border-left-color:#e4e4e4;border-right-color:#5a5a5a;border-top-color:#4f4fce"></div>
<div style="left:277px;top:221px;width:308px;height:14.8px;background:#4f4fce"></div>
<div style="left:280px;top:224.94px;height:10.92px;line-height:10.92px;font-size:8.4px;color:#fff;white-space:nowrap;letter-spacing:-0.199px;">Route &lt;0.0.0.0/0-&gt;pppoe-out1&gt;</div>
<div style="left:560px;top:223.5px;width:11.5px;height:11px;background:#f0f0f0;border:1px solid #fff;border-right-color:#555;border-bottom-color:#555"></div>
<svg style="left:560px;top:223.5px;width:11.5px;height:11px" viewBox="0 0 11.5 11.0"><rect x="1.84" y="1.65" width="8.05" height="7.92" fill="none" stroke="#3a3a3a" stroke-width="0.9"/><path d="M1.84 1.87 H9.89" stroke="#3a3a3a" stroke-width="1.26"/></svg>
<div style="left:572.5px;top:223.5px;width:11.5px;height:11px;background:#f0f0f0;border:1px solid #fff;border-right-color:#555;border-bottom-color:#555"></div>
<svg style="left:572.5px;top:223.5px;width:11.5px;height:11px" viewBox="0 0 11.5 11.0"><path d="M2.42 2.31 L9.20 8.91 M9.20 2.31 L2.42 8.91" stroke="#3a3a3a" stroke-width="1.125"/></svg>
<div style="left:277px;top:254px;width:231.5px;height:313.5px;border-right:1px solid #a4a4a4;border-bottom:1px solid #a4a4a4;border-top:1px solid #fff"></div>
<div style="left:280px;top:238.7px;width:37.5px;height:16.3px;background:#f0f0f0;border:1px solid #fff;border-right-color:#8a8a8a;border-bottom:none"></div>
<div style="left:98.75px;width:400px;text-align:center;top:241.82px;height:10.66px;line-height:10.66px;font-size:8.2px;color:#222;white-space:nowrap;">General</div>
<div style="left:318.7px;top:241px;width:30.8px;height:13px;background:#dcdcdc;border:1px solid #e8e8e8;border-right-color:#cfcfcf;border-bottom-color:#d4d4d4"></div>
<div style="left:134.1px;width:400px;text-align:center;top:243.47px;height:10.66px;line-height:10.66px;font-size:8.2px;color:#222;white-space:nowrap;">Status</div>
<div style="left:350.5px;top:241px;width:29.5px;height:13px;background:#dcdcdc;border:1px solid #e8e8e8;border-right-color:#cfcfcf;border-bottom-color:#d4d4d4"></div>
<div style="left:165.25px;width:400px;text-align:center;top:243.47px;height:10.66px;line-height:10.66px;font-size:8.2px;color:#222;white-space:nowrap;">MPLS</div>
<div style="left:282px;top:333.5px;width:222px;height:1px;background:#d2d2d2"></div>
<div style="left:282px;top:376.2px;width:222px;height:1px;background:#d2d2d2"></div>
<div style="left:282px;top:437.5px;width:222px;height:1px;background:#d2d2d2"></div>
<div style="left:282px;top:498.2px;width:222px;height:1px;background:#d2d2d2"></div>
<div style="left:-41px;width:400px;text-align:right;top:263.67px;height:10.66px;line-height:10.66px;font-size:8.2px;color:#222;white-space:nowrap;">Dst. Address:</div>
<div class="inp" style="left:362.3px;top:261px;width:141.4px;height:13.2px;"></div>
<div style="left:364.8px;top:263.67px;height:10.66px;line-height:10.66px;font-size:8.2px;color:#222;white-space:nowrap;letter-spacing:-0.230px;">0.0.0.0/0</div>
<div style="left:-41px;width:400px;text-align:right;top:282.07px;height:10.66px;line-height:10.66px;font-size:8.2px;color:#222;white-space:nowrap;">Gateway:</div>
<div class="inp" style="left:362.3px;top:279.4px;width:141.4px;height:13.2px;"></div>
<div style="left:364.8px;top:282.07px;height:10.66px;line-height:10.66px;font-size:8.2px;color:#222;white-space:nowrap;">pppoe-out1</div>
<div style="left:-41px;width:400px;text-align:right;top:302.37px;height:10.66px;line-height:10.66px;font-size:8.2px;color:#222;white-space:nowrap;">Immediate Gateway:</div>
<div style="left:362.8px;top:302.37px;height:10.66px;line-height:10.66px;font-size:8.2px;color:#2828d8;white-space:nowrap;text-decoration:underline;">pppoe-out1</div>
<div style="left:-41px;width:400px;text-align:right;top:317.27px;height:10.66px;line-height:10.66px;font-size:8.2px;color:#222;white-space:nowrap;">Local Address:</div>
<div class="ro" style="left:362.3px;top:314.6px;width:141.4px;height:13.2px;"></div>
<div style="left:-41px;width:400px;text-align:right;top:342.07px;height:10.66px;line-height:10.66px;font-size:8.2px;color:#222;white-space:nowrap;">Check Gateway:</div>
<div class="ro" style="left:362.3px;top:339.4px;width:126.5px;height:13.2px;"></div>
<svg style="left:494px;top:344.06px;width:7.2px;height:3.89px" viewBox="0 0 7.199999999999989 3.887999999999994"><path d="M0 0 H7.199999999999989 L3.5999999999999943 3.887999999999994Z" fill="#111"/></svg>
<div style="left:-41px;width:400px;text-align:right;top:385.27px;height:10.66px;line-height:10.66px;font-size:8.2px;color:#222;white-space:nowrap;">Distance:</div>
<div class="inp" style="left:362.3px;top:382.6px;width:126.5px;height:13.2px;"></div>
<div style="left:364.8px;top:385.27px;height:10.66px;line-height:10.66px;font-size:8.2px;color:#222;white-space:nowrap;">1</div>
<svg style="left:494px;top:387.81px;width:7.2px;height:3.89px" viewBox="0 0 7.199999999999989 3.887999999999994"><path d="M0 3.887999999999994 H7.199999999999989 L3.5999999999999943 0Z" fill="#111"/></svg>
<div style="left:-41px;width:400px;text-align:right;top:403.37px;height:10.66px;line-height:10.66px;font-size:8.2px;color:#222;white-space:nowrap;">Scope:</div>
<div class="inp" style="left:362.3px;top:400.7px;width:126.5px;height:13.2px;"></div>
<div style="left:364.8px;top:403.37px;height:10.66px;line-height:10.66px;font-size:8.2px;color:#222;white-space:nowrap;">30</div>
<svg style="left:494px;top:405.91px;width:7.2px;height:3.89px" viewBox="0 0 7.199999999999989 3.887999999999994"><path d="M0 3.887999999999994 H7.199999999999989 L3.5999999999999943 0Z" fill="#111"/></svg>
<div style="left:-41px;width:400px;text-align:right;top:421.37px;height:10.66px;line-height:10.66px;font-size:8.2px;color:#222;white-space:nowrap;">Target Scope:</div>
<div class="inp" style="left:362.3px;top:418.7px;width:126.5px;height:13.2px;"></div>
<div style="left:364.8px;top:421.37px;height:10.66px;line-height:10.66px;font-size:8.2px;color:#222;white-space:nowrap;">10</div>
<svg style="left:494px;top:423.91px;width:7.2px;height:3.89px" viewBox="0 0 7.199999999999989 3.887999999999994"><path d="M0 3.887999999999994 H7.199999999999989 L3.5999999999999943 0Z" fill="#111"/></svg>
<div style="left:-41px;width:400px;text-align:right;top:445.97px;height:10.66px;line-height:10.66px;font-size:8.2px;color:#222;white-space:nowrap;">VRF Interface:</div>
<div class="ro" style="left:362.3px;top:443.3px;width:126.5px;height:13.2px;"></div>
<svg style="left:494px;top:447.96px;width:7.2px;height:3.89px" viewBox="0 0 7.199999999999989 3.887999999999994"><path d="M0 0 H7.199999999999989 L3.5999999999999943 3.887999999999994Z" fill="#111"/></svg>
<div style="left:-41px;width:400px;text-align:right;top:464.07px;height:10.66px;line-height:10.66px;font-size:8.2px;color:#222;white-space:nowrap;">Routing Table:</div>
<div class="inp" style="left:362.3px;top:461.4px;width:126.5px;height:13.2px;"></div>
<div style="left:364.8px;top:464.07px;height:10.66px;line-height:10.66px;font-size:8.2px;color:#222;white-space:nowrap;">TRONGNUOC</div>
<div style="left:490.4px;top:461.4px;width:13px;height:13.2px;background:#f0f0f0;border:1px solid #fff;border-right-color:#8a8a8a;border-bottom-color:#8a8a8a;border-left-color:#c8c8c8"></div>
<svg style="left:490.4px;top:461.4px;width:13px;height:13.2px" viewBox="0 0 13.0 13.2"><path d="M3.6400000000000006 3.564 H9.36" stroke="#111" stroke-width="0.9"/><path d="M5.59 4.752 H7.409999999999999 V6.864 H9.62 L6.5 10.032 L3.38 6.864 H5.59Z" fill="#111"/></svg>
<div style="left:-41px;width:400px;text-align:right;top:482.07px;height:10.66px;line-height:10.66px;font-size:8.2px;color:#222;white-space:nowrap;">Pref. Source:</div>
<div class="ro" style="left:362.3px;top:479.4px;width:126.5px;height:13.2px;"></div>
<svg style="left:494px;top:484.06px;width:7.2px;height:3.89px" viewBox="0 0 7.199999999999989 3.887999999999994"><path d="M0 0 H7.199999999999989 L3.5999999999999943 3.887999999999994Z" fill="#111"/></svg>
<div style="left:362.5px;top:360.5px;width:8.3px;height:8.3px;background:#fff;border:1px solid #c0c0c0;border-top-color:#a8a8a8;border-left-color:#a8a8a8"></div>
<div style="left:375px;top:360.67px;height:10.66px;line-height:10.66px;font-size:8.2px;color:#222;white-space:nowrap;">Suppress Hw Offload</div>
<div style="left:362.5px;top:507.3px;width:8.3px;height:8.3px;background:#fff;border:1px solid #c0c0c0;border-top-color:#a8a8a8;border-left-color:#a8a8a8"></div>
<div style="left:375.4px;top:507.47px;height:10.66px;line-height:10.66px;font-size:8.2px;color:#222;white-space:nowrap;">Blackhole</div>
<div class="cell" style="left:278px;top:569px;width:47.5px;height:15.3px;"></div>
<div style="left:280.6px;top:572.72px;height:10.66px;line-height:10.66px;font-size:8.2px;color:#222;white-space:nowrap;">enabled</div>
<div class="cell" style="left:327.5px;top:569px;width:48.5px;height:15.3px;"></div>
<div style="left:330.1px;top:572.72px;height:10.66px;line-height:10.66px;font-size:8.2px;color:#222;white-space:nowrap;">active</div>
<div class="cell" style="left:378.5px;top:569px;width:48.3px;height:15.3px;"></div>
<div style="left:381.1px;top:572.72px;height:10.66px;line-height:10.66px;font-size:8.2px;color:#222;white-space:nowrap;">static</div>
<div class="cell" style="left:428px;top:569px;width:50px;height:15.3px;"></div>
<div style="left:430.6px;top:572.72px;height:10.66px;line-height:10.66px;font-size:8.2px;color:#b4b4b4;white-space:nowrap;">Hw Offload...</div>
<div class="cell" style="left:479px;top:569px;width:49px;height:15.3px;"></div>
<div style="left:481.6px;top:572.72px;height:10.66px;line-height:10.66px;font-size:8.2px;color:#b4b4b4;white-space:nowrap;">ECMP</div>
<div class="cell" style="left:529.4px;top:569px;width:53.9px;height:15.3px;"></div>
<div style="left:532px;top:572.72px;height:10.66px;line-height:10.66px;font-size:8.2px;color:#b4b4b4;white-space:nowrap;">inactive</div>
<div class="btn" style="left:516.3px;top:241.2px;width:63px;height:16px;font-size:8.2px;line-height:15.8px;border-color:#707070;">OK</div>
<div class="btn" style="left:516.3px;top:261px;width:63px;height:15.5px;font-size:8.2px;line-height:15.3px;">Cancel</div>
<div class="btn" style="left:516.3px;top:280px;width:63px;height:15.8px;font-size:8.2px;line-height:15.6px;">Apply</div>
<div class="btn" style="left:516.3px;top:302px;width:63px;height:16px;font-size:8.2px;line-height:15.8px;">Disable</div>
<div class="btn" style="left:516.3px;top:321.3px;width:63px;height:15.7px;font-size:8.2px;line-height:15.5px;">Comment</div>
<div class="btn" style="left:516.3px;top:340.7px;width:63px;height:16px;font-size:8.2px;line-height:15.8px;">Copy</div>
<div class="btn" style="left:516.3px;top:360px;width:63px;height:16.2px;font-size:8.2px;line-height:16px;">Remove</div>
<div style="left:166px;top:138px;width:21.5px;height:25px;border:3.2px solid #0b8158;box-sizing:border-box;"></div>
<div style="left:84.5px;top:231.2px;width:69.5px;height:17px;border:3.2px solid #0b8158;box-sizing:border-box;"></div>
<div style="left:168px;top:472.5px;width:83.5px;height:15.2px;border:3.2px solid #0b8158;box-sizing:border-box;"></div>
<div style="left:506.2px;top:231.2px;width:75.8px;height:28.8px;border:3.2px solid #0b8158;box-sizing:border-box;"></div>
<div style="left:320.7px;top:278.7px;width:191.3px;height:16.8px;border:3.2px solid #0b8158;box-sizing:border-box;"></div>
<div style="left:295.5px;top:377px;width:214.3px;height:57.2px;border:3.2px solid #0b8158;box-sizing:border-box;"></div>
<div style="left:301px;top:456.3px;width:211px;height:24px;border:3.2px solid #0b8158;box-sizing:border-box;"></div>
</div>
<svg style="left:170px;top:108px;width:30px;height:32px" viewBox="0 0 30 32"><path d="M17.2 5.3 L14.5 17" stroke="#0b8158" stroke-width="3.4"/><path d="M7.6 14.6 L22.4 18.8 L11.6 29.4Z" fill="#0b8158"/></svg>
</div>
<div id="right" style="left:0;top:0;width:1280px;height:720px;-webkit-text-stroke:0.2px"><div style="left:0;top:0;width:1280px;height:720px">
<div style="left:695.5px;top:72px;width:512.8px;height:594.5px;background:#f0f0f0;border:1px solid #8c8c8c;border-left-color:#333;border-right-color:#f2f2f2;border-top-color:#4f4fce"></div>
<div style="left:696.5px;top:73px;width:511.8px;height:23.3px;background:#4f4fce"></div>
<div style="left:701.3px;top:76.97px;height:18.07px;line-height:18.07px;font-size:13.9px;color:#fff;white-space:nowrap;letter-spacing:-0.278px;">Route &lt;0.0.0.0/0-&gt;pppoe-out2&gt;</div>
<div style="left:1167px;top:76.3px;width:18.3px;height:17.5px;background:#f0f0f0;border:1px solid #fff;border-right-color:#555;border-bottom-color:#555"></div>
<svg style="left:1167px;top:76.3px;width:18.3px;height:17.5px" viewBox="0 0 18.299999999999955 17.5"><rect x="2.93" y="2.62" width="12.81" height="12.60" fill="none" stroke="#3a3a3a" stroke-width="1.3"/><path d="M2.93 2.98 H15.74" stroke="#3a3a3a" stroke-width="1.8199999999999998"/></svg>
<div style="left:1187.3px;top:76.3px;width:19px;height:17.5px;background:#f0f0f0;border:1px solid #fff;border-right-color:#555;border-bottom-color:#555"></div>
<svg style="left:1187.3px;top:76.3px;width:19px;height:17.5px" viewBox="0 0 19.0 17.5"><path d="M3.99 3.67 L15.20 14.18 M15.20 3.67 L3.99 14.18" stroke="#3a3a3a" stroke-width="1.625"/></svg>
<div style="left:698px;top:127.5px;width:385px;height:508.5px;border-right:1px solid #747474;border-bottom:1px solid #747474;border-top:1px solid #fff"></div>
<div style="left:701.3px;top:98.7px;width:63.7px;height:29.8px;background:#f0f0f0;border:1px solid #fff;border-right-color:#8a8a8a;border-bottom:none"></div>
<div style="left:533.15px;width:400px;text-align:center;top:103.7px;height:17.81px;line-height:17.81px;font-size:13.7px;color:#222;white-space:nowrap;">General</div>
<div style="left:766.3px;top:103px;width:50.7px;height:24.5px;background:#dcdcdc;border:1px solid #e8e8e8;border-right-color:#cfcfcf;border-bottom-color:#d4d4d4"></div>
<div style="left:591.65px;width:400px;text-align:center;top:106.67px;height:17.81px;line-height:17.81px;font-size:13.7px;color:#222;white-space:nowrap;">Status</div>
<div style="left:818.7px;top:103px;width:50px;height:24.5px;background:#dcdcdc;border:1px solid #e8e8e8;border-right-color:#cfcfcf;border-bottom-color:#d4d4d4"></div>
<div style="left:643.7px;width:400px;text-align:center;top:106.67px;height:17.81px;line-height:17.81px;font-size:13.7px;color:#222;white-space:nowrap;">MPLS</div>
<div style="left:707.5px;top:258.8px;width:365.5px;height:1px;background:#c4c4c4"></div>
<div style="left:707.5px;top:330.2px;width:365.5px;height:1px;background:#c4c4c4"></div>
<div style="left:707.5px;top:432px;width:365.5px;height:1px;background:#c4c4c4"></div>
<div style="left:707.5px;top:532.8px;width:365.5px;height:1px;background:#c4c4c4"></div>
<div style="left:432.7px;width:400px;text-align:right;top:139.7px;height:17.81px;line-height:17.81px;font-size:13.7px;color:#222;white-space:nowrap;">Dst. Address:</div>
<div class="inp" style="left:838.3px;top:137.3px;width:234.7px;height:22px;"></div>
<div style="left:841.3px;top:139.5px;width:51.3px;height:18px;background:#0a78d6"></div>
<div style="left:892.4px;top:139.5px;width:1px;height:18px;background:#222"></div>
<div style="left:842.4px;top:139.7px;height:17.81px;line-height:17.81px;font-size:13.7px;color:#fff;white-space:nowrap;letter-spacing:-0.414px;">0.0.0.0/0</div>
<div style="left:432.7px;width:400px;text-align:right;top:169.9px;height:17.81px;line-height:17.81px;font-size:13.7px;color:#222;white-space:nowrap;">Gateway:</div>
<div class="inp" style="left:838.3px;top:167.5px;width:234.7px;height:22px;"></div>
<div style="left:842.5px;top:169.9px;height:17.81px;line-height:17.81px;font-size:13.7px;color:#222;white-space:nowrap;letter-spacing:0.167px;">pppoe-out2</div>
<div style="left:432.7px;width:400px;text-align:right;top:204.4px;height:17.81px;line-height:17.81px;font-size:13.7px;color:#222;white-space:nowrap;">Immediate Gateway:</div>
<div style="left:838.8px;top:204.4px;height:17.81px;line-height:17.81px;font-size:13.7px;color:#2828d8;white-space:nowrap;text-decoration:underline;letter-spacing:0.187px;">pppoe-out2</div>
<div style="left:432.7px;width:400px;text-align:right;top:229.7px;height:17.81px;line-height:17.81px;font-size:13.7px;color:#222;white-space:nowrap;">Local Address:</div>
<div class="ro" style="left:838.3px;top:227.3px;width:234.7px;height:22px;"></div>
<div style="left:432.7px;width:400px;text-align:right;top:270.9px;height:17.81px;line-height:17.81px;font-size:13.7px;color:#222;white-space:nowrap;">Check Gateway:</div>
<div class="ro" style="left:838.3px;top:268.5px;width:211.4px;height:22px;"></div>
<svg style="left:1057px;top:275.99px;width:13px;height:7.02px" viewBox="0 0 13 7.0200000000000005"><path d="M0 0 H13 L6.5 7.0200000000000005Z" fill="#111"/></svg>
<div style="left:432.7px;width:400px;text-align:right;top:342.4px;height:17.81px;line-height:17.81px;font-size:13.7px;color:#222;white-space:nowrap;">Distance:</div>
<div class="inp" style="left:838.3px;top:340px;width:211.4px;height:22px;"></div>
<div style="left:842.5px;top:342.4px;height:17.81px;line-height:17.81px;font-size:13.7px;color:#222;white-space:nowrap;">1</div>
<svg style="left:1057px;top:348.4px;width:13px;height:7.02px" viewBox="0 0 13 7.0200000000000005"><path d="M0 7.0200000000000005 H13 L6.5 0Z" fill="#111"/></svg>
<div style="left:432.7px;width:400px;text-align:right;top:372.4px;height:17.81px;line-height:17.81px;font-size:13.7px;color:#222;white-space:nowrap;">Scope:</div>
<div class="inp" style="left:838.3px;top:370px;width:211.4px;height:22px;"></div>
<div style="left:842.5px;top:372.4px;height:17.81px;line-height:17.81px;font-size:13.7px;color:#222;white-space:nowrap;">30</div>
<svg style="left:1057px;top:378.4px;width:13px;height:7.02px" viewBox="0 0 13 7.0200000000000005"><path d="M0 7.0200000000000005 H13 L6.5 0Z" fill="#111"/></svg>
<div style="left:432.7px;width:400px;text-align:right;top:402.4px;height:17.81px;line-height:17.81px;font-size:13.7px;color:#222;white-space:nowrap;">Target Scope:</div>
<div class="inp" style="left:838.3px;top:400px;width:211.4px;height:22px;"></div>
<div style="left:842.5px;top:402.4px;height:17.81px;line-height:17.81px;font-size:13.7px;color:#222;white-space:nowrap;">10</div>
<svg style="left:1057px;top:408.4px;width:13px;height:7.02px" viewBox="0 0 13 7.0200000000000005"><path d="M0 7.0200000000000005 H13 L6.5 0Z" fill="#111"/></svg>
<div style="left:432.7px;width:400px;text-align:right;top:443.6px;height:17.81px;line-height:17.81px;font-size:13.7px;color:#222;white-space:nowrap;">VRF Interface:</div>
<div class="ro" style="left:838.3px;top:441.2px;width:211.4px;height:22px;"></div>
<svg style="left:1057px;top:448.69px;width:13px;height:7.02px" viewBox="0 0 13 7.0200000000000005"><path d="M0 0 H13 L6.5 7.0200000000000005Z" fill="#111"/></svg>
<div style="left:432.7px;width:400px;text-align:right;top:473.9px;height:17.81px;line-height:17.81px;font-size:13.7px;color:#222;white-space:nowrap;">Routing Table:</div>
<div class="inp" style="left:838.3px;top:471.5px;width:211.4px;height:22px;"></div>
<div style="left:842.5px;top:473.9px;height:17.81px;line-height:17.81px;font-size:13.7px;color:#222;white-space:nowrap;">QUOCTE</div>
<div style="left:1052.5px;top:471.5px;width:20.5px;height:22px;background:#f0f0f0;border:1px solid #fff;border-right-color:#8a8a8a;border-bottom-color:#8a8a8a;border-left-color:#c8c8c8"></div>
<svg style="left:1052.5px;top:471.5px;width:20.5px;height:22px" viewBox="0 0 20.5 22"><path d="M5.74 5.94 H14.76" stroke="#111" stroke-width="1.4849999999999999"/><path d="M8.815 7.92 H11.684999999999999 V11.440000000000001 H15.17 L10.25 16.72 L5.33 11.440000000000001 H8.815Z" fill="#111"/></svg>
<div style="left:432.7px;width:400px;text-align:right;top:503.69px;height:17.81px;line-height:17.81px;font-size:13.7px;color:#222;white-space:nowrap;">Pref. Source:</div>
<div class="ro" style="left:838.3px;top:501.3px;width:211.4px;height:22px;"></div>
<svg style="left:1057px;top:508.79px;width:13px;height:7.02px" viewBox="0 0 13 7.0200000000000005"><path d="M0 0 H13 L6.5 7.0200000000000005Z" fill="#111"/></svg>
<div style="left:838.3px;top:302.5px;width:14.3px;height:14.3px;background:#fff;border:1px solid #c0c0c0;border-top-color:#a8a8a8;border-left-color:#a8a8a8"></div>
<div style="left:859.5px;top:301.4px;height:17.81px;line-height:17.81px;font-size:13.7px;color:#222;white-space:nowrap;">Suppress Hw Offload</div>
<div style="left:838.3px;top:546.3px;width:14.3px;height:14.3px;background:#fff;border:1px solid #c0c0c0;border-top-color:#a8a8a8;border-left-color:#a8a8a8"></div>
<div style="left:859.5px;top:544.69px;height:17.81px;line-height:17.81px;font-size:13.7px;color:#222;white-space:nowrap;">Blackhole</div>
<div class="cell" style="left:698.7px;top:638.3px;width:122.8px;height:24.2px;"></div>
<div style="left:702.7px;top:641.79px;height:17.81px;line-height:17.81px;font-size:13.7px;color:#222;white-space:nowrap;">enabled</div>
<div class="cell" style="left:824.5px;top:638.3px;width:122.8px;height:24.2px;"></div>
<div style="left:828.5px;top:641.79px;height:17.81px;line-height:17.81px;font-size:13.7px;color:#222;white-space:nowrap;">active</div>
<div class="cell" style="left:950.5px;top:638.3px;width:122.3px;height:24.2px;"></div>
<div style="left:954.5px;top:641.79px;height:17.81px;line-height:17.81px;font-size:13.7px;color:#222;white-space:nowrap;">static</div>
<div class="cell" style="left:1076.2px;top:638.3px;width:128.5px;height:24.2px;"></div>
<div style="left:1080.2px;top:641.79px;height:17.81px;line-height:17.81px;font-size:13.7px;color:#b4b4b4;white-space:nowrap;">Hw Offloaded</div>
<div class="btn" style="left:1095px;top:104px;width:104.4px;height:28.7px;font-size:13.7px;line-height:27.7px;border-color:#858585;border-color:#222;">OK</div>
<div class="btn" style="left:1095px;top:136.2px;width:104.4px;height:28.4px;font-size:13.7px;line-height:27.4px;border-color:#858585;">Cancel</div>
<div class="btn" style="left:1095px;top:168.2px;width:104.4px;height:28.6px;font-size:13.7px;line-height:27.6px;border-color:#858585;">Apply</div>
<div class="btn" style="left:1095px;top:205.5px;width:104.4px;height:28.3px;font-size:13.7px;line-height:27.3px;border-color:#858585;">Disable</div>
<div class="btn" style="left:1095px;top:237.5px;width:104.4px;height:28.3px;font-size:13.7px;line-height:27.3px;border-color:#858585;">Comment</div>
<div class="btn" style="left:1095px;top:269.5px;width:104.4px;height:28.2px;font-size:13.7px;line-height:27.2px;border-color:#858585;">Copy</div>
<div class="btn" style="left:1095px;top:301.5px;width:104.4px;height:28.1px;font-size:13.7px;line-height:27.1px;border-color:#858585;">Remove</div>
<div style="left:738.7px;top:131.2px;width:360.6px;height:36.5px;border:5.3px solid #0b8158;box-sizing:border-box;"></div>
<div style="left:721.2px;top:326.3px;width:373.5px;height:108.9px;border:5.3px solid #0b8158;box-sizing:border-box;"></div>
<div style="left:732.5px;top:465.5px;width:348.8px;height:34.7px;border:5.3px solid #0b8158;box-sizing:border-box;"></div>
</div></div>
</div></div>
</body></html>
